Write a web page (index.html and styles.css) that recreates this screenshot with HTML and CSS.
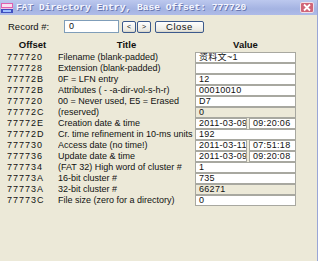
FILE: index.html
```html
<!DOCTYPE html>
<html>
<head>
<meta charset="utf-8">
<link rel="stylesheet" href="styles.css">
</head>
<body>
<div class="window">
  <div class="titlebar">
    <svg class="appicon" width="12" height="10" viewBox="0 0 12 10">
      <rect x="0" y="0" width="12" height="10" fill="#f4c0e0"/>
      <rect x="0" y="0" width="12" height="5" fill="#e060b0"/>
      <rect x="0" y="6" width="12" height="4" fill="#4050c0"/>
      <rect x="1" y="1" width="10" height="3" fill="#f8e0f0"/>
      <rect x="2" y="7" width="8" height="2" fill="#a0c0ff"/>
    </svg>
    <span class="title">FAT Directory Entry, Base Offset: 777720</span>
    <span class="closex">
      <svg width="14" height="11" viewBox="0 0 14 11">
        <rect x="0.5" y="0.5" width="13" height="10" rx="1.5" fill="#d06478" stroke="#f0e0e8"/>
        <path d="M4 2.5 L10 8.5 M10 2.5 L4 8.5" stroke="#fff" stroke-width="1.8"/>
      </svg>
    </span>
  </div>
  <div class="toolbar">
    <span class="label">Record #:</span>
    <span class="input">0</span>
    <span class="btn small">&lt;</span>
    <span class="btn small">&gt;</span>
    <span class="btn close">Close</span>
  </div>
  <div class="table">
    <div class="hd">Offset</div><div class="hd">Title</div><div class="hd">Value</div>

    <div class="off">777720</div><div class="ttl">Filename (blank-padded)</div><div class="val"><span class="box">资料文~1</span></div>
    <div class="off">777728</div><div class="ttl">Extension (blank-padded)</div><div class="val"><span class="box"></span></div>
    <div class="off">77772B</div><div class="ttl">0F = LFN entry</div><div class="val"><span class="box">12</span></div>
    <div class="off">77772B</div><div class="ttl">Attributes ( - -a-dir-vol-s-h-r)</div><div class="val"><span class="box">00010010</span></div>
    <div class="off">777720</div><div class="ttl">00 = Never used, E5 = Erased</div><div class="val"><span class="box">D7</span></div>
    <div class="off">77772C</div><div class="ttl">(reserved)</div><div class="val"><span class="box ro">0</span></div>
    <div class="off">77772E</div><div class="ttl">Creation date &amp; time</div><div class="val split"><span class="box d">2011-03-09</span><span class="box t">09:20:06</span></div>
    <div class="off">77772D</div><div class="ttl">Cr. time refinement in 10-ms units</div><div class="val"><span class="box">192</span></div>
    <div class="off">777730</div><div class="ttl">Access date (no time!)</div><div class="val split"><span class="box d">2011-03-11</span><span class="box t">07:51:18</span></div>
    <div class="off">777736</div><div class="ttl">Update date &amp; time</div><div class="val split"><span class="box d">2011-03-09</span><span class="box t">09:20:08</span></div>
    <div class="off">777734</div><div class="ttl">(FAT 32) High word of cluster #</div><div class="val"><span class="box">1</span></div>
    <div class="off">77773A</div><div class="ttl">16-bit cluster #</div><div class="val"><span class="box">735</span></div>
    <div class="off">77773A</div><div class="ttl">32-bit cluster #</div><div class="val"><span class="box ro">66271</span></div>
    <div class="off">77773C</div><div class="ttl">File size (zero for a directory)</div><div class="val"><span class="box">0</span></div>
  </div>
</div>
</body>
</html>
```
FILE: styles.css
```css
html, body {
  margin: 0;
  padding: 0;
}
body {
  width: 318px;
  height: 261px;
  overflow: hidden;
  background: #ece9d8;
  font-family: "Liberation Sans", Arial, "Noto Sans CJK SC", sans-serif;
  font-size: 9px;
  color: #111;
}
.window {
  width: 317px;
  height: 261px;
  border-right: 1px solid #9aa6d6;
  background: #ece9d8;
}
.titlebar {
  height: 15px;
  display: flex;
  align-items: center;
  background: linear-gradient(#bcc8ee, #a4b3e2 60%, #aebbe8);
  box-sizing: border-box;
  padding-left: 1px;
}
.appicon {
  flex: none;
}
.title {
  margin-left: 3px;
  font-family: "Liberation Mono", "Courier New", monospace;
  font-weight: bold;
  font-size: 9.6px;
  color: #f4f6ff;
  text-shadow: 1px 1px 0 #6a78b0;
  white-space: nowrap;
}
.closex {
  margin-left: auto;
  margin-right: 3px;
  display: flex;
}
.toolbar {
  display: flex;
  align-items: center;
  height: 19px;
  margin-top: 2px;
  padding-left: 8px;
}
.label {
  width: 56px;
  font-size: 9.5px;
}
.input {
  width: 55px;
  height: 13px;
  box-sizing: border-box;
  border: 1px solid #7f9db9;
  background: #fff;
  padding-left: 4px;
  line-height: 11px;
  margin-right: 3px;
}
.btn {
  height: 12px;
  box-sizing: border-box;
  border: 1px solid #3c5a8c;
  border-radius: 2px;
  background: linear-gradient(#fefefe, #ecebe4 80%, #d6d3c6);
  display: flex;
  align-items: center;
  justify-content: center;
  line-height: 10px;
}
.btn.small {
  width: 14px;
  margin-right: 1px;
  font-size: 7px;
}
.btn.close {
  width: 49px;
  margin-left: 3px;
  font-size: 9.5px;
  letter-spacing: 0.5px;
}
.table {
  display: grid;
  grid-template-columns: 51px 137px 101px;
  grid-template-rows: 15px;
  grid-auto-rows: 11px;
  padding-left: 7px;
  margin-top: 1px;
}
.hd {
  font-weight: bold;
  text-align: center;
  font-size: 9.5px;
  line-height: 15px;
}
.off, .ttl {
  line-height: 11px;
  white-space: nowrap;
  overflow: hidden;
}
.off {
  letter-spacing: 1px;
}
.val {
  display: flex;
  height: 11px;
}
.val.split {
  gap: 2px;
}
.box {
  flex: 1;
  box-sizing: border-box;
  height: 11px;
  border: 1px solid #a8a8a0;
  background: #fff;
  padding-left: 3px;
  line-height: 9px;
  font-size: 9px;
  white-space: nowrap;
  overflow: hidden;
  letter-spacing: 0.3px;
}
.box.ro {
  background: #ece9d8;
}
.box.d {
  flex: none;
  width: 52px;
}
.box.t {
  flex: none;
  width: 47px;
}
```
